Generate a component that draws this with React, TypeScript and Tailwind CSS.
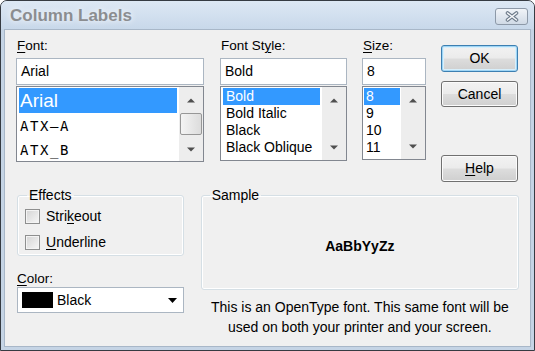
import type { ReactNode } from "react"

function Tri({ down }: { down?: boolean }) {
  return (
    <svg width="8" height="5" viewBox="0 0 8 5">
      <path d={down ? "M0 0.5 L8 0.5 L4 4.5 Z" : "M0 4.5 L8 4.5 L4 0.5 Z"} fill="#4f4f4f" />
    </svg>
  )
}

function U({ children }: { children: ReactNode }) {
  return <span className="underline decoration-1 underline-offset-[2px]">{children}</span>
}

function Btn({ children, def }: { children: ReactNode; def?: boolean }) {
  return (
    <div
      className={
        def
          ? "flex items-center justify-center rounded-[3px] border border-[#3c7fb1] bg-[linear-gradient(to_bottom,#f2f2f2,#ebebeb_49%,#dddddd_51%,#cfcfcf)] text-[14px] shadow-[inset_0_0_0_1px_#9fd5f5,inset_0_0_0_2px_#d8effb]"
          : "flex items-center justify-center rounded-[3px] border border-[#707070] bg-[linear-gradient(to_bottom,#f2f2f2,#ebebeb_49%,#dddddd_51%,#cfcfcf)] text-[14px] shadow-[inset_0_0_0_1px_#fbfbfb]"
      }
    >
      {children}
    </div>
  )
}

function Label({ children }: { children: ReactNode }) {
  return <div className="h-[16px] pl-[1px] text-[13.5px] leading-[16px]">{children}</div>
}

function Input({ value }: { value: string }) {
  return (
    <div className="mt-[4px] flex h-[27px] items-center border border-[#abb6c2] bg-white pl-[4px] text-[14px]">
      {value}
    </div>
  )
}

function Check({ children }: { children: ReactNode }) {
  return (
    <div className="flex h-[20px] items-center gap-[6px] pl-[7px] text-[14px]">
      <div className="h-[15px] w-[15px] border border-[#8e8f8f] bg-[linear-gradient(135deg,#d4d4d4,#f7f7f7)] shadow-[inset_0_0_0_1px_#f4f4f4]" />
      <span>{children}</span>
    </div>
  )
}

export default function App() {
  return (
    <div className="h-[351px] w-[535px] bg-white">
      <div className="flex h-full w-full flex-col rounded-t-[7px] border border-[#363b42] bg-[#c5d4e5] font-['Liberation_Sans',Arial,sans-serif] text-black">
        {/* title bar */}
        <div className="flex h-[28px] items-start justify-between rounded-t-[6px] bg-gradient-to-b from-[#dde8f4] to-[#c8d8ea] pl-[9px] pr-[6px]">
          <span className="mt-[5px] text-[17px] font-bold leading-[20px] text-[#8b8d90] [text-shadow:0_0_6px_#ffffff]">
            Column Labels
          </span>
          <div className="mt-[7px] flex h-[17px] w-[33px] items-center justify-center rounded-[3px] border border-[#8d99a8] bg-gradient-to-b from-[#f1f4f8] to-[#d0dae6]">
            <svg width="14" height="11" viewBox="0 0 14 11">
              <path d="M2.5 2 L11.5 9 M11.5 2 L2.5 9" stroke="#6d7a89" strokeWidth="3.6" strokeLinecap="round" />
              <path d="M2.5 2 L11.5 9 M11.5 2 L2.5 9" stroke="#f6f8fb" strokeWidth="1.5" strokeLinecap="round" />
            </svg>
          </div>
        </div>

        {/* body */}
        <div className="mx-[3px] mb-[3px] flex-1 border border-[#a8b7c8] bg-[#f0f0f0] px-[11px] pt-[8px]">
          <div className="flex items-start">
            {/* font */}
            <div className="w-[188px]">
              <Label>
                <U>F</U>ont:
              </Label>
              <Input value="Arial" />
              <div className="mt-[1px] flex h-[76px] border border-[#828790] bg-white">
                <div className="flex-1 overflow-hidden px-[2px] pt-[1px]">
                  <div className="h-[25px] bg-[#3399ff] pl-[1px] text-[19px] leading-[25px] text-white">Arial</div>
                  <div className="h-[26px] pl-[1px] font-['DejaVu_Sans_Mono',monospace] text-[14px] leading-[26px] tracking-[1.6px]">
                    ATX—A
                  </div>
                  <div className="h-[22px] pl-[1px] font-['DejaVu_Sans_Mono',monospace] text-[14px] leading-[22px] tracking-[1.6px]">
                    ATX_B
                  </div>
                </div>
                <div className="flex w-[24px] flex-col bg-[#ededed]">
                  <div className="flex h-[26px] items-center justify-center">
                    <Tri />
                  </div>
                  <div className="flex-1 px-[1px]">
                    <div className="h-[22px] rounded-[2px] border border-[#979797] bg-gradient-to-r from-[#f4f4f4] to-[#dcdcdc]" />
                  </div>
                  <div className="flex h-[24px] items-center justify-center">
                    <Tri down />
                  </div>
                </div>
              </div>
            </div>

            {/* style */}
            <div className="ml-[16px] w-[127px]">
              <Label>
                Font St<U>y</U>le:
              </Label>
              <Input value="Bold" />
              <div className="mt-[1px] flex h-[75px] border border-[#828790] bg-white">
                <div className="flex-1 overflow-hidden px-[2px] pt-[1px] text-[14px] leading-[17px]">
                  <div className="bg-[#3399ff] pl-[3px] text-white">Bold</div>
                  <div className="pl-[3px]">Bold Italic</div>
                  <div className="pl-[3px]">Black</div>
                  <div className="pl-[3px]">Black Oblique</div>
                </div>
                <div className="flex w-[24px] flex-col bg-[#ededed]">
                  <div className="flex h-[26px] items-center justify-center">
                    <Tri />
                  </div>
                  <div className="flex-1" />
                  <div className="flex h-[25px] items-center justify-center">
                    <Tri down />
                  </div>
                </div>
              </div>
            </div>

            {/* size */}
            <div className="ml-[15px] w-[64px]">
              <Label>
                <U>S</U>ize:
              </Label>
              <Input value="8" />
              <div className="mt-[1px] flex h-[74px] border border-[#828790] bg-white">
                <div className="flex-1 overflow-hidden px-[1px] pt-[1px] text-[14px] leading-[17px]">
                  <div className="bg-[#3399ff] pl-[2px] text-white">8</div>
                  <div className="pl-[2px]">9</div>
                  <div className="pl-[2px]">10</div>
                  <div className="pl-[2px]">11</div>
                </div>
                <div className="flex w-[24px] flex-col bg-[#ededed]">
                  <div className="flex h-[26px] items-center justify-center">
                    <Tri />
                  </div>
                  <div className="flex-1" />
                  <div className="flex h-[26px] items-center justify-center">
                    <Tri down />
                  </div>
                </div>
              </div>
            </div>

            {/* buttons */}
            <div className="ml-[15px] flex w-[77px] flex-col pt-[7px]">
              <div className="h-[27px]">
                <Btn def>
                  <span className="flex h-[25px] items-center">OK</span>
                </Btn>
              </div>
              <div className="mt-[9px] h-[26px]">
                <Btn>
                  <span className="flex h-[24px] items-center">Cancel</span>
                </Btn>
              </div>
              <div className="mt-[48px] h-[27px]">
                <Btn>
                  <span className="flex h-[25px] items-center">
                    <U>H</U>elp
                  </span>
                </Btn>
              </div>
            </div>
          </div>

          <div className="mt-[5px] flex items-start">
            {/* effects + color */}
            <div className="ml-[1px] w-[167px]">
              <fieldset className="rounded-[3px] border border-[#d5dfe5] pb-[3px] pt-[3px] shadow-[inset_0_0_0_1px_#ffffff]">
                <legend className="ml-[9px] px-[2px] text-[14px] leading-[16px]">Effects</legend>
                <Check>
                  Stri<U>k</U>eout
                </Check>
                <div className="mt-[6px]">
                  <Check>
                    <U>U</U>nderline
                  </Check>
                </div>
              </fieldset>
              <div className="mt-[15px] h-[16px] text-[13.5px] leading-[16px]">
                <U>C</U>olor:
              </div>
              <div className="flex h-[26px] items-center border border-[#abb6c2] bg-white pl-[4px] pr-[6px] text-[14px]">
                <div className="h-[16px] w-[31px] bg-black" />
                <span className="ml-[4px] flex-1">Black</span>
                <svg width="9" height="5" viewBox="0 0 9 5">
                  <path d="M0 0 L9 0 L4.5 5 Z" fill="#000000" />
                </svg>
              </div>
            </div>

            {/* sample */}
            <div className="ml-[17px] w-[319px]">
              <fieldset className="h-[103px] rounded-[3px] border border-[#d5dfe5] shadow-[inset_0_0_0_1px_#ffffff]">
                <legend className="ml-[8px] px-[2px] text-[14px] leading-[16px]">Sample</legend>
                <div className="flex h-[86px] items-center justify-center text-[14px] font-bold">AaBbYyZz</div>
              </fieldset>
              <div className="mt-[7px] text-center text-[14px] leading-[20px]">
                This is an OpenType font. This same font will be
                <br />
                used on both your printer and your screen.
              </div>
            </div>
          </div>
        </div>
      </div>
    </div>
  )
}
